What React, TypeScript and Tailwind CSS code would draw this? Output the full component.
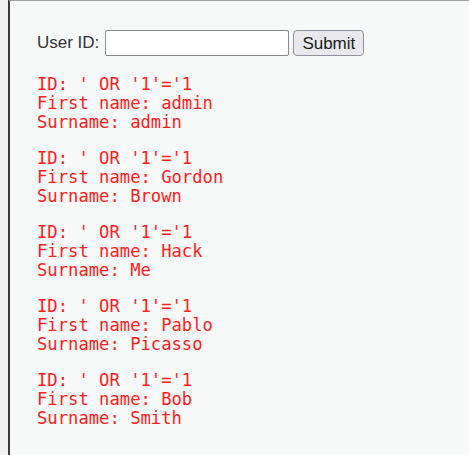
import React from 'react';

interface User {
  first: string;
  last: string;
}

const users: User[] = [
  { first: 'admin', last: 'admin' },
  { first: 'Gordon', last: 'Brown' },
  { first: 'Hack', last: 'Me' },
  { first: 'Pablo', last: 'Picasso' },
  { first: 'Bob', last: 'Smith' },
];

const App: React.FC = () => {
  return (
    <div className="flex h-[455px] w-[469px] overflow-hidden bg-[#f1f1f1]">
      <div className="w-[8px] shrink-0" />
      <div className="flex-1 border-l-2 border-t border-l-[#3a3a3a] border-t-[#a0a0a0] bg-[#f7f8f8] pl-[27px] pt-[29px]">
        {/* form */}
        <div className="flex items-center font-['Liberation_Sans',Arial,sans-serif] text-[17px] text-[#333]">
          <span>User ID:</span>
          <input
            type="text"
            className="ml-[6px] h-[26px] w-[184px] rounded-[2px] border border-[#8a8a8a] bg-white px-1"
          />
          <button className="ml-[4px] h-[26px] w-[71px] rounded-[4px] border border-[#8f8f9d] bg-[#e9e9ed] text-[17px] leading-none text-[#1a1a1a]">
            Submit
          </button>
        </div>

        {/* results */}
        <div className="mt-[19px] flex flex-col gap-[17px]">
          {users.map((u) => (
            <pre
              key={u.first}
              className="font-['DejaVu_Sans_Mono',monospace] text-[17.2px] leading-[19px] text-[#ff2020]"
            >
              {`ID: ' OR '1'='1\nFirst name: ${u.first}\nSurname: ${u.last}`}
            </pre>
          ))}
        </div>
      </div>
    </div>
  );
};

export default App;
